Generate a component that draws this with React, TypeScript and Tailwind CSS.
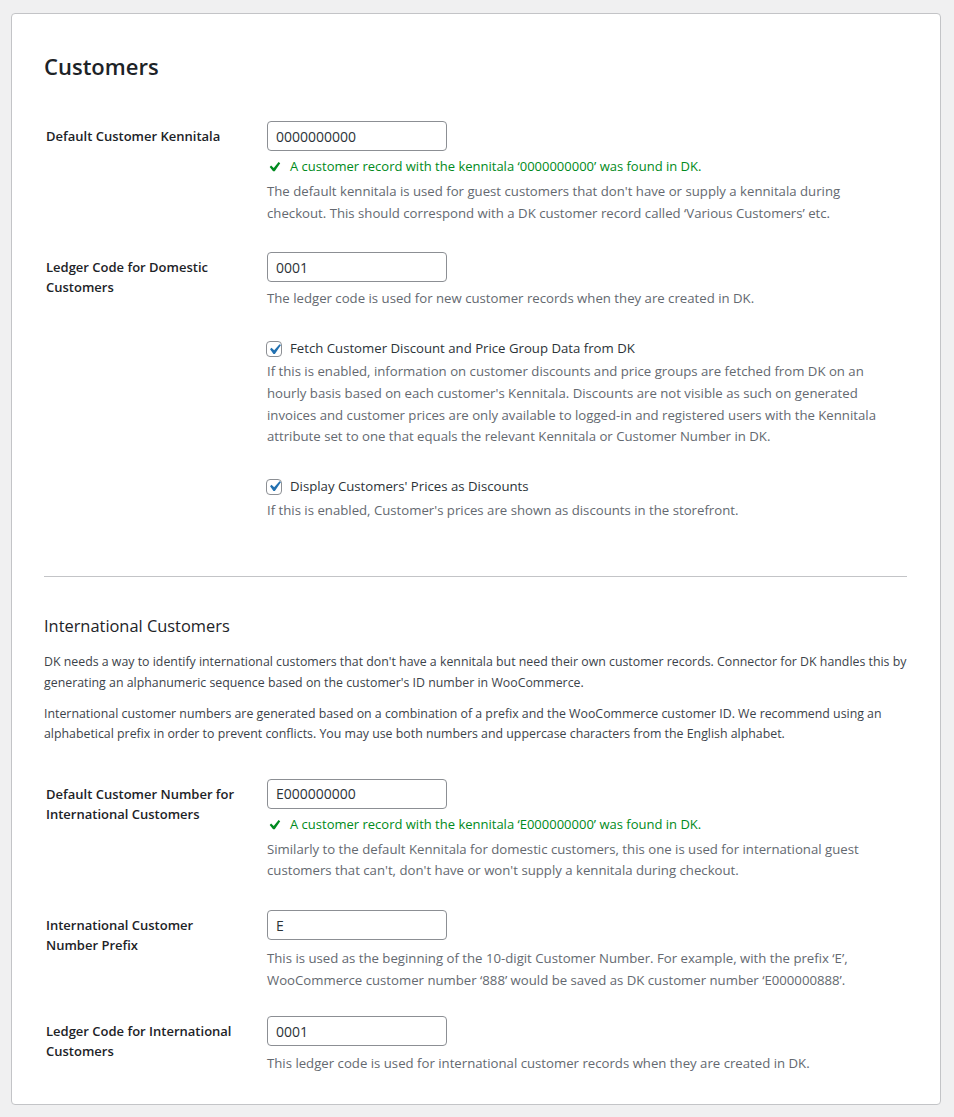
const FONT = "font-['Open_Sans',_'Noto_Sans',_sans-serif]";

function Check() {
  return (
    <svg viewBox="0 0 20 20" className="-ml-[2px] h-[18px] w-[18px] shrink-0 fill-[#008a20]">
      <path d="M15.1 4.4l1.8 1.3-6.1 8.9H9L5.2 9.9l1.6-1.5 2.9 2.7z" />
    </svg>
  );
}

function Found({ value }: { value: string }) {
  return (
    <div className="mt-[6px] flex h-[20px] items-center gap-[7px] text-[13px] text-[#008a20]">
      <Check />
      <span>A customer record with the kennitala ‘{value}’ was found in DK.</span>
    </div>
  );
}

function TextInput({ value }: { value: string }) {
  return (
    <input
      readOnly
      value={value}
      className="h-[30px] w-[180px] rounded-[4px] border border-[#8c8f94] bg-white px-2 text-[14px] text-[#2c3338] outline-none"
    />
  );
}

function Row({
  label,
  className,
  children,
}: {
  label: React.ReactNode;
  className?: string;
  children: React.ReactNode;
}) {
  return (
    <div className={"grid grid-cols-[223px_1fr] " + (className ?? "")}>
      <div className="pl-[2px] pt-[5px] text-[13px] leading-[20px] font-semibold text-[#1d2327]">
        {label}
      </div>
      <div>{children}</div>
    </div>
  );
}

function Desc({ children, className }: { children: React.ReactNode; className?: string }) {
  return (
    <p className={"max-w-[620px] text-[13.2px] leading-[21.7px] text-[#646970] " + (className ?? "")}>
      {children}
    </p>
  );
}

function Checkbox({ label }: { label: string }) {
  return (
    <label className="flex h-[20px] items-center gap-[8px] text-[13.2px] text-[#2c3338]">
      <span className="-ml-[1px] flex h-[16px] w-[16px] items-center justify-center overflow-visible rounded-[4px] border border-[#8c8f94] bg-white">
        <svg viewBox="0 0 20 20" className="h-[21px] w-[21px] shrink-0 fill-[#2271b1]">
          <path d="M14.83 4.89l1.34.94-5.81 8.38H9.02L5.78 9.67l1.34-1.25 2.57 2.4z" />
        </svg>
      </span>
      {label}
    </label>
  );
}

export default function App() {
  return (
    <div className={"min-h-screen bg-[#f0f0f1] pl-[11px] pr-[13px] pt-[13px] pb-[13px] " + FONT}>
      <div className="rounded-[4px] border border-[#c3c4c7] bg-white pl-[32px] pr-[33px] pt-[36px] pb-[29px]">
        <h2 className="text-[22px] leading-[32px] font-semibold text-[#1d2327]">Customers</h2>

        <Row label="Default Customer Kennitala" className="mt-[39px]">
          <TextInput value="0000000000" />
          <Found value="0000000000" />
          <Desc className="mt-[4px]">
            The default kennitala is used for guest customers that don't have or supply a kennitala during
            checkout. This should correspond with a DK customer record called ‘Various Customers’ etc.
          </Desc>
        </Row>

        <Row label={<>Ledger Code for Domestic<br />Customers</>} className="mt-[28px]">
          <TextInput value="0001" />
          <Desc className="mt-[6px]">
            The ledger code is used for new customer records when they are created in DK.
          </Desc>
          <div className="mt-[29px]">
            <Checkbox label="Fetch Customer Discount and Price Group Data from DK" />
            <Desc className="mt-[2px]">
              If this is enabled, information on customer discounts and price groups are fetched from DK on an
              hourly basis based on each customer's Kennitala. Discounts are not visible as such on generated
              invoices and customer prices are only available to logged-in and registered users with the
              Kennitala attribute set to one that equals the relevant Kennitala or Customer Number in DK.
            </Desc>
          </div>
          <div className="mt-[29px]">
            <Checkbox label="Display Customers' Prices as Discounts" />
            <Desc className="mt-[3px]">
              If this is enabled, Customer's prices are shown as discounts in the storefront.
            </Desc>
          </div>
        </Row>

        <hr className="mt-[54px] border-0 border-t border-[#c3c4c7]" />

        <h3 className="mt-[37px] text-[16.4px] leading-[24px] font-normal text-[#1d2327]">
          International Customers
        </h3>
        <p className="mt-[13px] text-[12.35px] leading-[21px] text-[#3c434a]">
          DK needs a way to identify international customers that don't have a kennitala but need their own
          customer records. Connector for DK handles this by generating an alphanumeric sequence based on the
          customer's ID number in WooCommerce.
        </p>
        <p className="mt-[11px] text-[12.35px] leading-[20.5px] text-[#3c434a]">
          International customer numbers are generated based on a combination of a prefix and the WooCommerce
          customer ID. We recommend using an alphabetical prefix in order to prevent conflicts. You may use
          both numbers and uppercase characters from the English alphabet.
        </p>

        <Row
          label={<>Default Customer Number for<br />International Customers</>}
          className="mt-[34px]"
        >
          <TextInput value="E000000000" />
          <Found value="E000000000" />
          <Desc className="mt-[4px]">
            Similarly to the default Kennitala for domestic customers, this one is used for international guest
            customers that can't, don't have or won't supply a kennitala during checkout.
          </Desc>
        </Row>

        <Row label={<>International Customer<br />Number Prefix</>} className="mt-[28px]">
          <TextInput value="E" />
          <Desc className="mt-[8px]">
            This is used as the beginning of the 10-digit Customer Number. For example, with the prefix ‘E’,
            WooCommerce customer number ‘888’ would be saved as DK customer number ‘E000000888’.
          </Desc>
        </Row>

        <Row label={<>Ledger Code for International<br />Customers</>} className="mt-[25px]">
          <TextInput value="0001" />
          <Desc className="mt-[7px]">
            This ledger code is used for international customer records when they are created in DK.
          </Desc>
        </Row>
      </div>
    </div>
  );
}
